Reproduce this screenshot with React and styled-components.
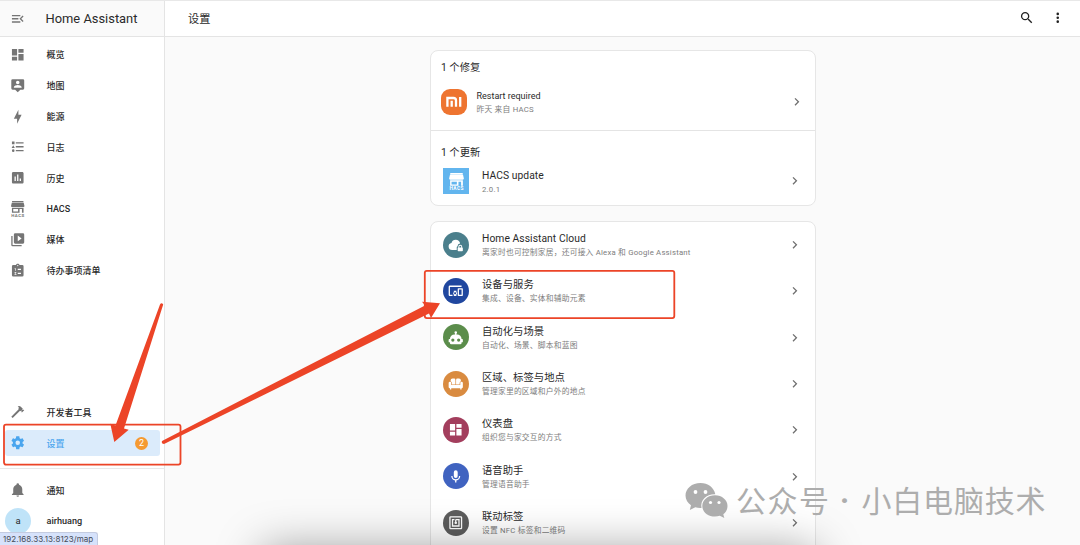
import React from "react";
import styled, { createGlobalStyle } from "styled-components";

const GlobalStyle = createGlobalStyle`
  * {
    box-sizing: border-box;
  }
  body {
    margin: 0;
    overflow: hidden;
    background: #fafafa;
    color: #2a2a2a;
    font-family: Roboto, "Noto Sans CJK SC", sans-serif;
    -webkit-font-smoothing: antialiased;
  }
`;

const Page = styled.div`
  position: relative;
  display: flex;
  width: 1080px;
  height: 545px;
  overflow: hidden;
  border-top: 1px solid #e8e8e8;
`;

const Sidebar = styled.aside`
  display: flex;
  flex-direction: column;
  width: 165px;
  height: 544px;
  flex-shrink: 0;
  background: #fff;
  border-right: 1px solid #e4e4e4;
`;

const SidebarHeader = styled.div`
  display: flex;
  align-items: center;
  height: 36px;
  padding-left: 10px;
  flex-shrink: 0;
  background: #fafafa;
  border-bottom: 1px solid #e4e4e4;
`;

const Brand = styled.span`
  margin-left: 20px;
  font-size: 12.9px;
  line-height: 16px;
  white-space: nowrap;
`;

const Nav = styled.nav`
  display: flex;
  flex-direction: column;
  gap: 4.9px;
  padding: ${(p) => p.$pad};
`;

const NavItem = styled.div`
  display: flex;
  align-items: center;
  height: 26px;
  padding: 0 12px 0 5px;
  border-radius: 3px;
  background: ${(p) => (p.$active ? "#dbebfb" : "transparent")};
  color: ${(p) => (p.$active ? "#4aa5ee" : "#2a2a2a")};
  font-size: 9px;
  font-weight: 500;
`;

const NavIcon = styled.span`
  display: flex;
  width: 16px;
  color: ${(p) => (p.$active ? "#4aa5ee" : "#757575")};
`;

const NavLabel = styled.span`
  flex: 1;
  margin-left: 20.5px;
  white-space: nowrap;
`;

const Badge = styled.span`
  width: 13px;
  height: 13px;
  border-radius: 50%;
  background: #f59a32;
  color: #fff;
  font-size: 9px;
  font-weight: 400;
  line-height: 13px;
  text-align: center;
`;

const Spacer = styled.div`
  flex: 1;
`;

const SidebarFoot = styled.div`
  height: 77px;
  padding: 8px 5px 0;
  border-top: 1px solid #e8e8e8;
`;

const UserRow = styled.div`
  display: flex;
  align-items: center;
  height: 26px;
  margin-top: 5px;
  font-size: 9.1px;
  font-weight: 500;
`;

const Avatar = styled.span`
  width: 26px;
  height: 26px;
  margin-right: 15.5px;
  border-radius: 50%;
  background: #bfe3f8;
  font-size: 9.5px;
  font-weight: 400;
  line-height: 26px;
  text-align: center;
`;

const Main = styled.main`
  flex: 1;
  display: flex;
  flex-direction: column;
  height: 544px;
`;

const Toolbar = styled.header`
  display: flex;
  align-items: center;
  height: 36px;
  padding: 0 15px 1px 23px;
  flex-shrink: 0;
  background: #fff;
  border-bottom: 1px solid #e4e4e4;
`;

const PageTitle = styled.h1`
  flex: 1;
  margin: 0;
  font-size: 11.2px;
  font-weight: 400;
`;

const ToolbarActions = styled.div`
  display: flex;
  gap: 15.5px;
`;

const Content = styled.div`
  display: flex;
  flex-direction: column;
  gap: 15px;
  width: 386px;
  margin: 13px 0 0 265px;
`;

const Card = styled.section`
  background: #fff;
  border: 1px solid #e6e6e6;
  border-radius: 8px;
`;

const CardSection = styled.div`
  height: ${(p) => p.$height};
  border-bottom: ${(p) => (p.$divided ? "1px solid #e4e4e4" : "none")};
`;

const SectionTitle = styled.div`
  height: ${(p) => p.$height};
  padding: ${(p) => p.$top} 0 0 10px;
  font-size: 10.3px;
  line-height: 14px;
`;

const Row = styled.div`
  display: flex;
  align-items: center;
  height: ${(p) => p.$height || "46.35px"};
  padding: ${(p) => p.$pad || "0 13px 0 12px"};
`;

const SettingsList = styled.div`
  margin-top: -0.6px;
  padding-bottom: 20px;
`;

const RowText = styled.div`
  flex: 1;
  margin-left: ${(p) => p.$gap || "13px"};
`;

const Title = styled.div`
  font-size: ${(p) => p.$size || "10.3px"};
  line-height: 15px;
  letter-spacing: ${(p) => p.$spacing || "0.06px"};
  white-space: nowrap;
`;

const Subtitle = styled.div`
  margin: ${(p) => (p.$tight ? "0" : "1px 0 -1px")};
  color: #7d7d7d;
  font-size: 7.75px;
  line-height: 12px;
  letter-spacing: 0.22px;
  white-space: nowrap;
`;

const Disc = styled.span`
  display: flex;
  align-items: center;
  justify-content: center;
  width: 26px;
  height: 26px;
  border-radius: 50%;
  background: ${(p) => p.$color};
  color: #fff;
`;

const MiLogo = styled(Disc)`
  border-radius: 9px;
`;

const HacsLogo = styled(Disc)`
  border-radius: 0;
`;

const Overlay = styled.svg`
  position: absolute;
  top: -1px;
  left: 0;
`;

const StatusUrl = styled.div`
  position: absolute;
  left: 0;
  bottom: 0;
  width: 98px;
  height: 13px;
  padding-left: 3px;
  border: 1px solid #c3cbe0;
  border-left: 0;
  border-bottom: 0;
  border-radius: 0 3px 0 0;
  background: #d6e2fb;
  color: #454b57;
  font-family: Inter, sans-serif;
  font-size: 8px;
  line-height: 13px;
  letter-spacing: 0.06px;
  white-space: nowrap;
`;

const Watermark = styled.div`
  position: absolute;
  left: 685px;
  top: 475px;
  display: flex;
  align-items: center;
  color: #adadad;
  font-family: "Noto Sans CJK SC", sans-serif;
  font-size: 30px;
  font-weight: 400;
  line-height: 40px;
  white-space: nowrap;
`;

const WatermarkText = styled.span`
  margin-left: ${(p) => p.$gap};
  letter-spacing: ${(p) => p.$spacing};
`;

const WatermarkDot = styled.span`
  width: 12px;
  margin: 6px 0 0 8px;
  font-family: Roboto, sans-serif;
  font-size: 36px;
  font-weight: 500;
  text-align: center;
`;

const BottomShadow = styled.div`
  position: absolute;
  left: 262px;
  top: 548px;
  width: 554px;
  height: 60px;
  box-shadow: 0 0 46px rgba(0, 0, 0, 0.38);
`;

const paths = {
  menu: "M21,15.61L19.59,17L14.58,12L19.59,7L21,8.39L17.44,12L21,15.61M3,6H16V8H3V6M3,13V11H13V13H3M3,18V16H16V18H3Z",
  dashboard: "M13,3V9H21V3M13,21H21V11H13M3,21H11V15H3M3,13H11V3H3V13Z",
  map: "M20,2H4A2,2 0 0,0 2,4V16A2,2 0 0,0 4,18H8L12,22L16,18H20A2,2 0 0,0 22,16V4A2,2 0 0,0 20,2M12,4.3C13.5,4.3 14.7,5.5 14.7,7C14.7,8.5 13.5,9.7 12,9.7C10.5,9.7 9.3,8.5 9.3,7C9.3,5.5 10.5,4.3 12,4.3M18,15H6V14.1C6,12.1 10,11 12,11C14,11 18,12.1 18,14.1V15Z",
  bolt: "M11 15H6L13 1V9H18L11 23V15Z",
  list: "M5,9.5L7.5,14H2.5L5,9.5M3,4H7V8H3V4M5,20A2,2 0 0,0 7,18A2,2 0 0,0 5,16A2,2 0 0,0 3,18A2,2 0 0,0 5,20M9,5V7H21V5H9M9,19H21V17H9V19M9,13H21V11H9V13Z",
  chart: "M9 17H7V10H9V17M13 17H11V7H13V17M17 17H15V13H17V17M19 3H5C3.9 3 3 3.9 3 5V19C3 20.1 3.9 21 5 21H19C20.1 21 21 20.1 21 19V5C21 3.9 20.1 3 19 3Z",
  media: "M4,6H2V20A2,2 0 0,0 4,22H18V20H4V6M20,2H8A2,2 0 0,0 6,4V16A2,2 0 0,0 8,18H20A2,2 0 0,0 22,16V4A2,2 0 0,0 20,2M12,14.5V5.5L18,10L12,14.5Z",
  todo: "M19,3H14.82C14.4,1.84 13.3,1 12,1C10.7,1 9.6,1.84 9.18,3H5A2,2 0 0,0 3,5V19A2,2 0 0,0 5,21H19A2,2 0 0,0 21,19V5A2,2 0 0,0 19,3M7,8H9V12H8V9H7V8M10,17V18H7V17.08L9,15H7V14H9.25A0.75,0.75 0 0,1 10,14.75C10,14.95 9.92,15.14 9.79,15.27L8.12,17H10M11,4A1,1 0 0,1 12,3A1,1 0 0,1 13,4A1,1 0 0,1 12,5A1,1 0 0,1 11,4M17,17H12V15H17V17M17,11H12V9H17V11Z",
  hammer: "M2 19.63L13.43 8.2L12.72 7.5L14.14 6.07L12 3.89C13.2 2.7 15.09 2.7 16.27 3.89L19.87 7.5L18.45 8.91H21.29L22 9.62L18.45 13.21L17.74 12.5V9.62L16.27 11.04L15.56 10.33L4.13 21.76L2 19.63Z",
  cog: "M12,15.5A3.5,3.5 0 0,1 8.5,12A3.5,3.5 0 0,1 12,8.5A3.5,3.5 0 0,1 15.5,12A3.5,3.5 0 0,1 12,15.5M19.43,12.97C19.47,12.65 19.5,12.33 19.5,12C19.5,11.67 19.47,11.34 19.43,11L21.54,9.37C21.73,9.22 21.78,8.95 21.66,8.73L19.66,5.27C19.54,5.05 19.27,4.96 19.05,5.05L16.56,6.05C16.04,5.66 15.5,5.32 14.87,5.07L14.5,2.42C14.46,2.18 14.25,2 14,2H10C9.75,2 9.54,2.18 9.5,2.42L9.13,5.07C8.5,5.32 7.96,5.66 7.44,6.05L4.95,5.05C4.73,4.96 4.46,5.05 4.34,5.27L2.34,8.73C2.21,8.95 2.27,9.22 2.46,9.37L4.57,11C4.53,11.34 4.5,11.67 4.5,12C4.5,12.33 4.53,12.65 4.57,12.97L2.46,14.63C2.27,14.78 2.21,15.05 2.34,15.27L4.34,18.73C4.46,18.95 4.73,19.03 4.95,18.95L7.44,17.94C7.96,18.34 8.5,18.68 9.13,18.93L9.5,21.58C9.54,21.82 9.75,22 10,22H14C14.25,22 14.46,21.82 14.5,21.58L14.87,18.93C15.5,18.67 16.04,18.34 16.56,17.94L19.05,18.95C19.27,19.03 19.54,18.95 19.66,18.73L21.66,15.27C21.78,15.05 21.73,14.78 21.54,14.63L19.43,12.97Z",
  bell: "M21,19V20H3V19L5,17V11C5,7.9 7.03,5.17 10,4.29C10,4.19 10,4.1 10,4A2,2 0 0,1 12,2A2,2 0 0,1 14,4C14,4.1 14,4.19 14,4.29C16.97,5.17 19,7.9 19,11V17L21,19M14,21A2,2 0 0,1 12,23A2,2 0 0,1 10,21",
  magnify: "M9.5,3A6.5,6.5 0 0,1 16,9.5C16,11.11 15.41,12.59 14.44,13.73L14.71,14H15.5L20.5,19L19,20.5L14,15.5V14.71L13.73,14.44C12.59,15.41 11.11,16 9.5,16A6.5,6.5 0 0,1 3,9.5A6.5,6.5 0 0,1 9.5,3M9.5,5C7,5 5,7 5,9.5C5,12 7,14 9.5,14C12,14 14,12 14,9.5C14,7 12,5 9.5,5Z",
  dots: "M12,16A2,2 0 0,1 14,18A2,2 0 0,1 12,20A2,2 0 0,1 10,18A2,2 0 0,1 12,16M12,10A2,2 0 0,1 14,12A2,2 0 0,1 12,14A2,2 0 0,1 10,12A2,2 0 0,1 12,10M12,4A2,2 0 0,1 14,6A2,2 0 0,1 12,8A2,2 0 0,1 10,6A2,2 0 0,1 12,4Z",
  chevron: "M8.59,16.58L13.17,12L8.59,7.41L10,6L16,12L10,18L8.59,16.58Z",
  cloud: "M12,20H6.5A5.5,5.5 0 0,1 5.4,9.1A6.8,6.8 0 0,1 18.6,9.4V10.1A4.2,4.2 0 0,0 14.8,14.2A2.2,2.2 0 0,0 13.5,16.2V20H12M22,16.3V15A3,3 0 0,0 16,15V16.3A1.2,1.2 0 0,0 15,17.5V21A1.2,1.2 0 0,0 16.2,22.2H21.8A1.2,1.2 0 0,0 23,21V17.5A1.2,1.2 0 0,0 22,16.3M20.5,16.3H17.5V15A1.5,1.5 0 0,1 20.5,15V16.3Z",
  devices: "M3 6H21V4H3C1.9 4 1 4.9 1 6V18C1 19.1 1.9 20 3 20H7V18H3V6M13 12H9V13.78C8.39 14.33 8 15.11 8 16C8 16.89 8.39 17.67 9 18.22V20H13V18.22C13.61 17.67 14 16.88 14 16S13.61 14.33 13 13.78V12M11 17.5C10.17 17.5 9.5 16.83 9.5 16S10.17 14.5 11 14.5 12.5 15.17 12.5 16 11.83 17.5 11 17.5M22 8H16C15.5 8 15 8.5 15 9V19C15 19.5 15.5 20 16 20H22C22.5 20 23 19.5 23 19V9C23 8.5 22.5 8 22 8M21 18H17V10H21V18Z",
  robot: "M12,2A2,2 0 0,1 14,4C14,4.74 13.6,5.39 13,5.73V7H14A7,7 0 0,1 21,14H22A1,1 0 0,1 23,15V18A1,1 0 0,1 22,19H21V20A2,2 0 0,1 19,22H5A2,2 0 0,1 3,20V19H2A1,1 0 0,1 1,18V15A1,1 0 0,1 2,14H3A7,7 0 0,1 10,7H11V5.73C10.4,5.39 10,4.74 10,4A2,2 0 0,1 12,2M7.5,13A2.5,2.5 0 0,0 5,15.5A2.5,2.5 0 0,0 7.5,18A2.5,2.5 0 0,0 10,15.5A2.5,2.5 0 0,0 7.5,13M16.5,13A2.5,2.5 0 0,0 14,15.5A2.5,2.5 0 0,0 16.5,18A2.5,2.5 0 0,0 19,15.5A2.5,2.5 0 0,0 16.5,13Z",
  sofa: "M7,4H9.5A2,2 0 0,1 11.5,6V13H6V11A3,3 0 0,0 4,8.2V7A3,3 0 0,1 7,4M17,4H14.5A2,2 0 0,0 12.5,6V13H18V11A3,3 0 0,1 20,8.2V7A3,3 0 0,0 17,4M3,9A2,2 0 0,1 5,11V14H19V11A2,2 0 0,1 23,11V17A2,2 0 0,1 21,19V21H19V19H5V21H3V19A2,2 0 0,1 1,17V11A2,2 0 0,1 3,9Z",
  mic: "M12,2A3,3 0 0,1 15,5V11A3,3 0 0,1 12,14A3,3 0 0,1 9,11V5A3,3 0 0,1 12,2M19,11C19,14.53 16.39,17.44 13,17.93V21H11V17.93C7.61,17.44 5,14.53 5,11H7A5,5 0 0,0 12,16A5,5 0 0,0 17,11H19Z",
  nfc: "M18,6H13A2,2 0 0,0 11,8V10.28C10.41,10.62 10,11.26 10,12A2,2 0 0,0 12,14C13.11,14 14,13.1 14,12C14,11.26 13.6,10.62 13,10.28V8H16V16H8V8H10V6H8L6,6V18H18M20,20H4V4H20M20,2H4A2,2 0 0,0 2,4V20A2,2 0 0,0 4,22H20C21.11,22 22,21.1 22,20V4C22,2.89 21.11,2 20,2Z",
};

const Icon = ({ name, size = 15.5, color = "currentColor" }) => (
  <svg width={size} height={size} viewBox="0 0 24 24">
    <path d={paths[name]} fill={color} fillRule="evenodd" />
  </svg>
);

const HacsIcon = ({ size = 15.5 }) => (
  <svg
    width={size}
    height={size}
    viewBox="0 0 24 24"
    fill="currentColor"
    overflow="visible"
  >
    <path d="M3.2 0H20.8V2H3.2ZM2.8 2.6H21.2L22.4 7.8A1.6 1.6 0 0 1 21 9.4H3A1.6 1.6 0 0 1 1.6 7.8Z" />
    <path
      fillRule="evenodd"
      d="M3 10.4H21V18H18.5V12.4H14.8V18H3ZM5 12.4V16.2H12.5V12.4Z"
    />
    <text
      x="12"
      y="24.6"
      textAnchor="middle"
      fontFamily="Roboto, sans-serif"
      fontSize="6.8"
      fontWeight="700"
      textLength="20"
    >
      HACS
    </text>
  </svg>
);

const MiIcon = () => (
  <svg width="26" height="26" viewBox="0 0 26 26" fill="none" stroke="#fff">
    <path d="M6.4 17.8V9H12.4Q15 9 15 11.6V17.8" strokeWidth="2.3" />
    <path d="M10.7 11.7V17.8M19.2 7.9V17.8" strokeWidth="2.3" />
  </svg>
);

const WechatIcon = () => (
  <svg width="43" height="40" viewBox="0 -4 43 40">
    <path
      fill="#adadad"
      d="M15.5 0C7 0 .5 5.5 .5 12.6C.5 16.5 2.6 20 6 22.3L4.8 27L10.3 24.3Q13 25.2 16.5 25C15 17 21.5 11 30.3 11.3C29 4.5 23 0 15.5 0Z"
    />
    <path
      fill="#adadad"
      d="M30 12.2C22.8 12.2 17.3 17 17.3 23C17.3 29 22.8 33.6 30 33.6Q32.5 33.6 34.8 32.8L39.3 35L38.3 31.2C41 29.2 42.5 26.4 42.5 23C42.5 17 37 12.2 30 12.2Z"
    />
    <g fill="#fff">
      <circle cx="10.5" cy="9" r="1.9" />
      <circle cx="20.5" cy="9" r="1.9" />
      <circle cx="25.5" cy="19.5" r="1.6" />
      <circle cx="34" cy="19.5" r="1.6" />
    </g>
  </svg>
);

const navItems = [
  { icon: "dashboard", label: "概览" },
  { icon: "map", label: "地图" },
  { icon: "bolt", label: "能源" },
  { icon: "list", label: "日志" },
  { icon: "chart", label: "历史" },
  { icon: "hacs", label: "HACS" },
  { icon: "media", label: "媒体" },
  { icon: "todo", label: "待办事项清单" },
];

const settings = [
  {
    icon: "cloud",
    color: "#4b7f8c",
    title: "Home Assistant Cloud",
    text: "离家时也可控制家居，还可接入 Alexa 和 Google Assistant",
  },
  {
    icon: "devices",
    color: "#20479f",
    title: "设备与服务",
    text: "集成、设备、实体和辅助元素",
  },
  {
    icon: "robot",
    color: "#5b8d4b",
    title: "自动化与场景",
    text: "自动化、场景、脚本和蓝图",
  },
  {
    icon: "sofa",
    color: "#d98b40",
    title: "区域、标签与地点",
    text: "管理家里的区域和户外的地点",
  },
  {
    icon: "dashboard",
    color: "#a33e5d",
    title: "仪表盘",
    text: "组织您与家交互的方式",
  },
  {
    icon: "mic",
    color: "#4063c0",
    title: "语音助手",
    text: "管理语音助手",
  },
  {
    icon: "nfc",
    color: "#5d5d5d",
    title: "联动标签",
    text: "设置 NFC 标签和二维码",
  },
];

const SidebarItem = ({ icon, label, active, badge }) => (
  <NavItem $active={active}>
    <NavIcon $active={active}>
      {icon === "hacs" ? <HacsIcon /> : <Icon name={icon} />}
    </NavIcon>
    <NavLabel>{label}</NavLabel>
    {badge && <Badge>{badge}</Badge>}
  </NavItem>
);

export default function App() {
  return (
    <Page>
      <GlobalStyle />
      <Sidebar>
        <SidebarHeader>
          <Icon name="menu" color="#757575" />
          <Brand>Home Assistant</Brand>
        </SidebarHeader>
        <Nav $pad="4.5px 4px 0 5px">
          {navItems.map((item) => (
            <SidebarItem key={item.label} {...item} />
          ))}
        </Nav>
        <Spacer />
        <Nav $pad="0 4px 12px 5px">
          <SidebarItem icon="hammer" label="开发者工具" />
          <SidebarItem icon="cog" label="设置" active badge="2" />
        </Nav>
        <SidebarFoot>
          <SidebarItem icon="bell" label="通知" />
          <UserRow>
            <Avatar>a</Avatar>
            airhuang
          </UserRow>
        </SidebarFoot>
      </Sidebar>
      <Main>
        <Toolbar>
          <PageTitle>设置</PageTitle>
          <ToolbarActions>
            <Icon name="magnify" color="#212121" />
            <Icon name="dots" color="#212121" />
          </ToolbarActions>
        </Toolbar>
        <Content>
          <Card>
            <CardSection $height="80px" $divided>
              <SectionTitle $height="28px" $top="10px">
                1 个修复
              </SectionTitle>
              <Row $height="46px" $pad="0 11px 0 10px">
                <MiLogo $color="#ee7430">
                  <MiIcon />
                </MiLogo>
                <RowText $gap="9.5px">
                  <Title $size="9px" $spacing="0">
                    Restart required
                  </Title>
                  <Subtitle $tight>昨天 来自 HACS</Subtitle>
                </RowText>
                <Icon name="chevron" color="#6f6f6f" />
              </Row>
            </CardSection>
            <CardSection $height="74px">
              <SectionTitle $height="27px" $top="15px">
                1 个更新
              </SectionTitle>
              <Row>
                <HacsLogo $color="#62b5ee">
                  <HacsIcon size={17} />
                </HacsLogo>
                <RowText>
                  <Title>HACS update</Title>
                  <Subtitle>2.0.1</Subtitle>
                </RowText>
                <Icon name="chevron" color="#6f6f6f" />
              </Row>
            </CardSection>
          </Card>
          <Card>
            <SettingsList>
              {settings.map((item) => (
                <Row key={item.title}>
                  <Disc $color={item.color}>
                    <Icon name={item.icon} />
                  </Disc>
                  <RowText>
                    <Title>{item.title}</Title>
                    <Subtitle>{item.text}</Subtitle>
                  </RowText>
                  <Icon name="chevron" color="#6f6f6f" />
                </Row>
              ))}
            </SettingsList>
          </Card>
        </Content>
      </Main>
      <BottomShadow />
      <StatusUrl>192.168.33.13:8123/map</StatusUrl>
      <Watermark>
        <WechatIcon />
        <WatermarkText $gap="8px" $spacing="1.5px">
          公众号
        </WatermarkText>
        <WatermarkDot>·</WatermarkDot>
        <WatermarkText $gap="11px" $spacing="0.8px">
          小白电脑技术
        </WatermarkText>
      </Watermark>
      <Overlay width="1080" height="545" viewBox="0 0 1080 545">
        <g fill="none" stroke="#ec4427" strokeWidth="1.8">
          <rect x="4" y="424.6" width="176.5" height="40" rx="2" />
          <rect x="424.8" y="270.8" width="249.5" height="47.3" rx="2" />
        </g>
        <g fill="#ec4427">
          <path d="M160 304.5Q161.5 302 163.2 304.5L124 428.5L128.7 429.8L114.3 442L110.3 423.8L115.5 425.5Z" />
          <path d="M162 441L425 305.5L422 301.7L440 303.3L431 318L429 313.5L164 444Q161 444 162 441Z" />
        </g>
      </Overlay>
    </Page>
  );
}
